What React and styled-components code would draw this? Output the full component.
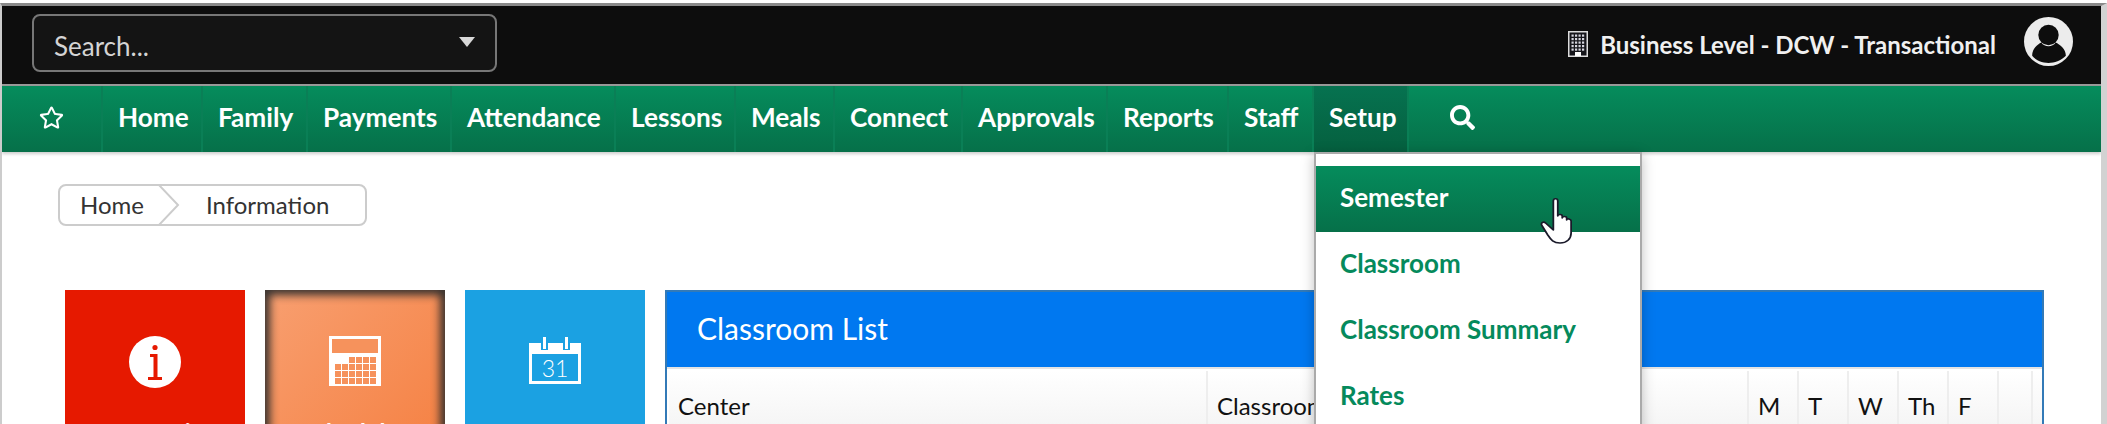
import React from 'react'
import styled, { createGlobalStyle } from 'styled-components'
import { FaSearch, FaRegStar } from 'react-icons/fa'

const Global = createGlobalStyle`
  html, body { margin: 0; padding: 0; background: #fff; overflow: hidden; }
  body { font-family: Lato, "Open Sans", sans-serif; }
`

const green = 'linear-gradient(to bottom, #058c5c, #067049)'

const Frame = styled.div`
  margin-top: 3px;
  height: 421px;
  box-sizing: border-box;
  border-top: 3px solid #8a8a8a;
  border-left: 2px solid #ccc;
  border-right: 6px solid #d2d2d2;
  overflow: hidden;
  position: relative;
`
const TopBar = styled.header`
  height: 80px;
  box-sizing: border-box;
  background: #0d0d0d;
  border-bottom: 2px solid #999;
  display: flex;
  align-items: flex-start;
  padding: 8px 28px 0 30px;
`
const SearchBox = styled.div`
  width: 465px;
  height: 58px;
  box-sizing: border-box;
  border: 2px solid #777;
  border-radius: 8px;
  background: #141414;
  display: flex;
  justify-content: space-between;
  color: #d4d4d4;
  font-size: 26px;
  padding: 14px 20px 0 20px;
`
const Caret = styled.span`
  width: 0;
  height: 0;
  margin-top: 7px;
  border-left: 8px solid transparent;
  border-right: 8px solid transparent;
  border-top: 10px solid #d8d8d8;
`
const Business = styled.div`
  margin-left: auto;
  display: flex;
  align-items: center;
  gap: 12px;
  height: 52px;
  padding-top: 4px;
  color: #f0f0f0;
  font-size: 24px;
  font-weight: 700;
`
const Avatar = styled.div`
  margin-left: 28px;
  margin-top: 3px;
  line-height: 0;
`
const NavBar = styled.nav`
  height: 66px;
  background: ${green};
  display: flex;
  box-shadow: 0 2px 3px rgba(0, 0, 0, 0.2);
`
const NavItem = styled.div`
  display: flex;
  align-items: center;
  box-sizing: border-box;
  width: ${p => p.$w}px;
  padding-left: 15px;
  padding-bottom: 4px;
  border-right: 2px solid ${p => (p.$bare ? 'transparent' : '#0a7f56')};
  color: #fff;
  font-size: 26.2px;
  font-weight: 700;
  background: ${p => (p.$active ? 'linear-gradient(to bottom, #067250, #05603f)' : 'none')};
`
const IconCell = styled(NavItem)`
  justify-content: center;
  padding-left: 0;
  padding-bottom: 4px;
`
const Content = styled.main`
  padding: 32px 0 0 56px;
`
const Crumbs = styled.div`
  width: 309px;
  height: 42px;
  box-sizing: border-box;
  border: 2px solid #ccc;
  border-radius: 8px;
  display: flex;
  align-items: center;
  font-size: 24px;
  color: #333;
  overflow: hidden;
`
const Crumb = styled.span`
  margin-left: ${p => p.$ml}px;
  padding-bottom: 2px;
`
const Chevron = styled.svg`
  flex: none;
  margin-left: 14px;
`
const Row = styled.div`
  display: flex;
  gap: 20px;
  margin: 64px 0 0 7px;
  align-items: flex-start;
`
const Tile = styled.div`
  width: 180px;
  height: 180px;
  flex: none;
  box-sizing: border-box;
  background: ${p => p.$bg};
  box-shadow: ${p => (p.$glow ? 'inset 0 0 8px 5px rgba(45, 45, 45, 0.95)' : 'none')};
  color: #fff;
  display: flex;
  flex-direction: column;
  align-items: center;
  padding-top: 46px;
  font-size: 24px;
  font-weight: 700;
`
const TileIcon = styled.div`
  height: 52px;
  line-height: 0;
`
const TileLabel = styled.div`
  margin-top: 30px;
  line-height: 30px;
`
const Panel = styled.section`
  width: 1379px;
  flex: none;
  box-sizing: border-box;
  border: 2px solid #337ab7;
  background: #fff;
`
const PanelHead = styled.div`
  height: 77px;
  box-sizing: border-box;
  background: #0078f0;
  color: #fff;
  font-size: 30px;
  padding: 18px 0 0 30px;
  border-bottom: 2px solid #e4e4e4;
`
const HeadRow = styled.div`
  margin: 2px 0 0 2px;
  display: flex;
  height: 60px;
  background: linear-gradient(to bottom, #fff, #f4f4f4);
`
const Th = styled.div`
  width: ${p => p.$w}px;
  flex: none;
  box-sizing: border-box;
  border-right: 2px solid #eee;
  padding: 20px 0 0 9px;
  font-size: 24px;
  color: #111;
`
const Menu = styled.div`
  position: absolute;
  left: 1312px;
  top: 146px;
  width: 328px;
  height: 280px;
  box-sizing: border-box;
  background: #fff;
  border: 2px solid #aaa;
  padding-top: 12px;
  box-shadow: 0 3px 12px rgba(0, 0, 0, 0.25);
`
const MenuItem = styled.div`
  height: 66px;
  box-sizing: border-box;
  padding: 15px 0 0 24px;
  font-size: 26px;
  font-weight: 700;
  color: ${p => (p.$active ? '#fff' : '#058a5c')};
  background: ${p => (p.$active ? green : 'none')};
`
const Pointer = styled.svg`
  position: absolute;
  left: 1538px;
  top: 191px;
`

const BuildingIcon = () => (
  <svg width="20" height="26" viewBox="0 0 20 26">
    <rect x="0.75" y="0.75" width="18.5" height="24.5" fill="#15151a" stroke="#dcdcdc" strokeWidth="1.5" />
    <g fill="#d6d6de">
      {[0, 1, 2, 3, 4].map(r => [0, 1, 2, 3].map(c => (
        <rect key={r + '-' + c} x={3.5 + c * 3.5} y={3.5 + r * 3.5} width="2.2" height="2.2" />
      )))}
    </g>
    <rect x="7" y="21" width="6" height="4" fill="#fff" />
  </svg>
)

const UserIcon = () => (
  <svg width="49" height="49" viewBox="0 0 48 48">
    <circle cx="24" cy="24" r="24" fill="#ececec" />
    <circle cx="24" cy="17.7" r="10" fill="#0d0d0d" />
    <path d="M8 38C8 31 13 27 17 25C20 30 28 30 31 25C35 27 41 31 41 38C36 43 30 45 24 45C18 45 12 43 8 38z" fill="#0d0d0d" />
  </svg>
)

const InfoIcon = () => (
  <svg width="52" height="52" viewBox="0 0 52 52">
    <circle cx="26" cy="26" r="26" fill="#fff" />
    <circle cx="26" cy="11.5" r="2.6" fill="#e61900" />
    <path d="M21 18h7.5v23H33v3H19v-3h5.5V21H21z" fill="#e61900" />
  </svg>
)

const ScheduleIcon = () => (
  <svg width="52" height="50" viewBox="0 0 52 50">
    <rect width="52" height="50" fill="#fff" />
    <rect x="3" y="3" width="46" height="14" fill="#f6925c" />
    <g fill="#f6925c">
      {[0, 1, 2, 3].map(r => [0, 1, 2, 3, 4, 5].map(c => (
        (r > 0 || c > 1) && <rect key={r + '-' + c} x={6 + c * 7} y={21 + r * 7} width="6" height="6" />
      )))}
    </g>
  </svg>
)

const CalendarIcon = () => (
  <svg width="52" height="48" viewBox="0 0 52 48">
    <path d="M0 7h52v41H0z" fill="#fff" />
    <rect x="3" y="18" width="46" height="27" fill="#1ba1e2" />
    <rect x="12" y="0" width="7" height="14" fill="#1ba1e2" />
    <rect x="34" y="0" width="7" height="14" fill="#1ba1e2" />
    <rect x="14" y="1" width="3" height="12" fill="#fff" />
    <rect x="36" y="1" width="3" height="12" fill="#fff" />
    <text x="26" y="40.5" textAnchor="middle" fill="#fff" fontSize="23" fontWeight="300" fontFamily="Lato, sans-serif">31</text>
  </svg>
)

const items = [
  ['Home', 100], ['Family', 105], ['Payments', 144], ['Attendance', 164], ['Lessons', 120],
  ['Meals', 99], ['Connect', 128], ['Approvals', 145], ['Reports', 121], ['Staff', 85],
]
const days = ['M', 'T', 'W', 'Th', 'F']

const App = () => (
  <>
    <Global />
    <Frame>
      <TopBar>
        <SearchBox>
          <span>Search...</span>
          <Caret />
        </SearchBox>
        <Business>
          <BuildingIcon />
          <span>Business Level - DCW - Transactional</span>
        </Business>
        <Avatar><UserIcon /></Avatar>
      </TopBar>
      <NavBar>
        <IconCell $w={101}><FaRegStar size={25} /></IconCell>
        {items.map(([label, w]) => <NavItem key={label} $w={w}>{label}</NavItem>)}
        <NavItem $w={95} $active>Setup</NavItem>
        <IconCell $w={108} $bare><FaSearch size={25} /></IconCell>
      </NavBar>
      <Content>
        <Crumbs>
          <Crumb $ml={20}>Home</Crumb>
          <Chevron width="22" height="42" viewBox="0 0 22 42">
            <path d="M0 0l20 21L0 42" fill="none" stroke="#ccc" strokeWidth="2" />
          </Chevron>
          <Crumb $ml={26}>Information</Crumb>
        </Crumbs>
        <Row>
          <Tile $bg="#e61900"><TileIcon><InfoIcon /></TileIcon><TileLabel>Information</TileLabel></Tile>
          <Tile $bg="linear-gradient(135deg, #f89f70, #f57f40)" $glow><TileIcon><ScheduleIcon /></TileIcon><TileLabel>Schedules</TileLabel></Tile>
          <Tile $bg="#1ba1e2"><TileIcon><CalendarIcon /></TileIcon><TileLabel>Semester</TileLabel></Tile>
          <Panel>
            <PanelHead>Classroom List</PanelHead>
            <HeadRow>
              <Th $w={539}>Center</Th>
              <Th $w={541}>Classroom</Th>
              {days.map(d => <Th key={d} $w={50}>{d}</Th>)}
              <Th $w={34} />
            </HeadRow>
          </Panel>
        </Row>
      </Content>
      <Menu>
        <MenuItem $active>Semester</MenuItem>
        <MenuItem>Classroom</MenuItem>
        <MenuItem>Classroom Summary</MenuItem>
        <MenuItem>Rates</MenuItem>
      </Menu>
      <Pointer width="40" height="48" viewBox="0 0 36 48" preserveAspectRatio="none">
        <path d="M12 4c0-3 4-3 4 0v15c0-2 4-2 4 0v2c0-2 4-2 4 0v2c0-2 4-1 4 1v12c0 6-4 10-10 10s-8-3-11-8L2 29c-2-3 1-5 3-3l7 7z" fill="#fff" stroke="#1a1a2a" strokeWidth="1.6" strokeLinejoin="round" />
      </Pointer>
    </Frame>
  </>
)

export default App
